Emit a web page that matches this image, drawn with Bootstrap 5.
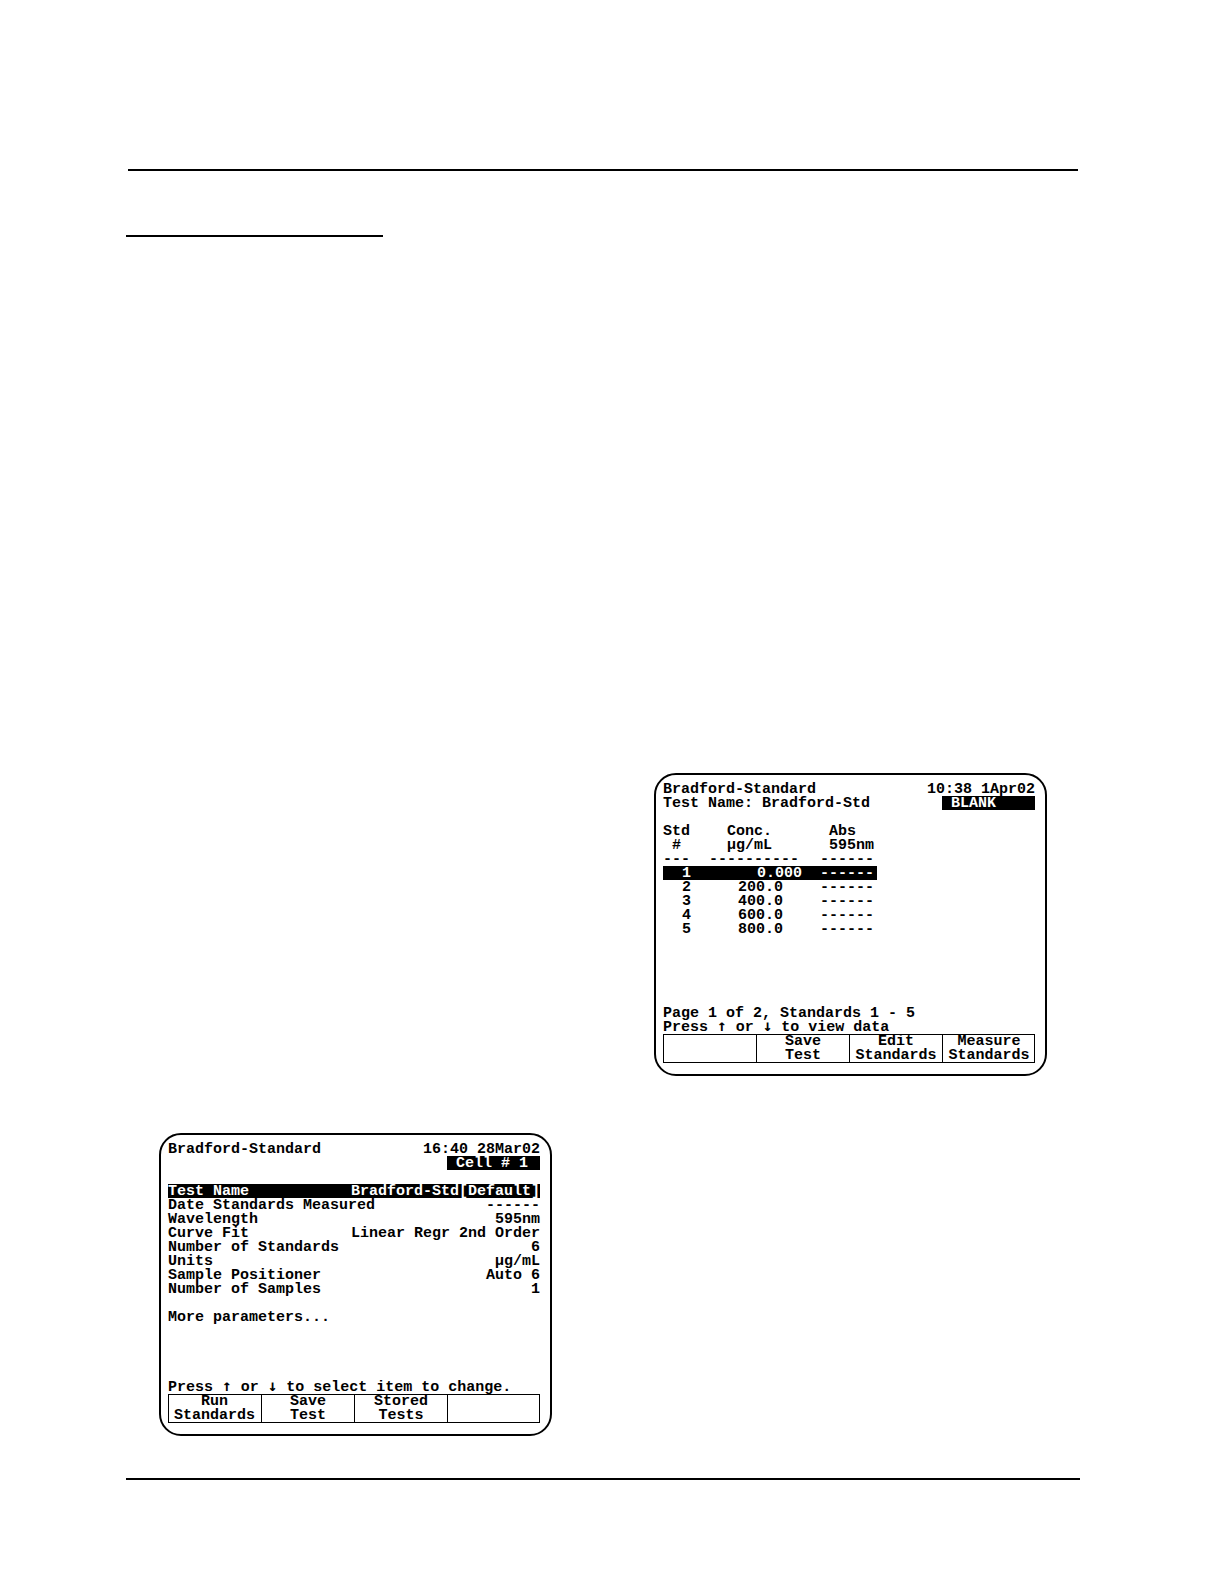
<!DOCTYPE html>
<html lang="en">
<head>
<meta charset="utf-8">
<meta name="viewport" content="width=device-width, initial-scale=1">
<title>Bradford-Standard</title>
<link rel="stylesheet" href="https://cdn.jsdelivr.net/npm/bootstrap@5.3.0/dist/css/bootstrap.min.css">
<style>
  body { background: #fff; color: #000; }
  .sheet { padding: 169px 144px 104px 126px; }
  .rule { height: 2px; margin: 0; border: 0; background: #000; opacity: 1; }
  .rule-head { margin: 0 2px 64px; }
  .rule-title { width: 257px; }
  .figures { margin: 536px 0 42px; padding: 0 33px; }
  .figure-lower { margin-top: 360px; }

  .lcd {
    width: 393px; max-width: 100%;
    padding: 7px 10px 11px 7px;
    border: 2px solid #000; border-radius: 22px;
    font: bold 15px/14px "Liberation Mono", "DejaVu Sans Mono", monospace;
    white-space: nowrap;
  }
  .lcd h2, .lcd p { margin: 0; font: inherit; }
  .lcd h2, .lcd p, .lcd time, .lcd th, .lcd td, .lcd .status { padding: 2px 0 0; line-height: 12px; }
  .lcd table { table-layout: fixed; border-collapse: collapse; }
  .lcd th, .lcd td { font-weight: inherit; vertical-align: top; }
  .lcd .invert { background: #000; color: #fff; }
  .lcd .status { width: 93px; padding-left: 9px; }
  .lcd .gap-line { margin-top: 14px; }
  .parameters-body { height: 196px; }
  .standards-body { height: 182px; }
  .arrow { font-family: "DejaVu Sans Mono", monospace; font-size: 16px; line-height: 1px; }

  .col-label { width: 180px; }
  .standards { width: 214px; }
  .col-std { width: 46px; }
  .col-conc { width: 111px; }
  .lcd .num { padding-right: 18px; text-align: right; }
  .lcd .short { padding-right: 37px; }
  .lcd .in-one { padding-left: 9px; }
  .lcd .in-two { padding-left: 18px; }

  .softkeys { display: grid; grid-template-columns: repeat(4, 1fr); box-shadow: inset 0 0 0 1px #000; }
  .softkeys button { padding: 1px 0 0; border: 0; background: none; color: inherit; font: inherit; }
  .softkeys button + button { border-left: 1px solid #000; }
</style>
<script src="https://cdn.jsdelivr.net/npm/bootstrap@5.3.0/dist/js/bootstrap.bundle.min.js"></script>
</head>
<body>
<main class="sheet">
  <hr class="rule rule-head">
  <hr class="rule rule-title">

  <div class="figures d-flex justify-content-between align-items-start">
    <section class="lcd figure-lower" aria-label="Test parameters">
      <header class="d-flex justify-content-between"><h2>Bradford-Standard</h2><time>16:40 28Mar02</time></header>
      <div class="d-flex justify-content-end"><span class="status invert">Cell # 1</span></div>
      <div class="parameters-body gap-line">
        <table class="w-100">
          <colgroup><col class="col-label"><col></colgroup>
          <tbody>
            <tr class="invert"><th scope="row">Test Name</th><td class="text-end">Bradford-Std[Default]</td></tr>
            <tr><th scope="row">Date Standards Measured</th><td class="text-end">------</td></tr>
            <tr><th scope="row">Wavelength</th><td class="text-end">595nm</td></tr>
            <tr><th scope="row">Curve Fit</th><td class="text-end">Linear Regr 2nd Order</td></tr>
            <tr><th scope="row">Number of Standards</th><td class="text-end">6</td></tr>
            <tr><th scope="row">Units</th><td class="text-end">µg/mL</td></tr>
            <tr><th scope="row">Sample Positioner</th><td class="text-end">Auto 6</td></tr>
            <tr><th scope="row">Number of Samples</th><td class="text-end">1</td></tr>
          </tbody>
        </table>
        <p class="gap-line">More parameters...</p>
      </div>
      <p>Press <span class="arrow">↑</span> or <span class="arrow">↓</span> to select item to change.</p>
      <div class="softkeys">
        <button type="button">Run<br>Standards</button>
        <button type="button">Save<br>Test</button>
        <button type="button">Stored<br>Tests</button>
        <button type="button" aria-label="Unused key"></button>
      </div>
    </section>

    <section class="lcd" aria-label="Standards data">
      <header class="d-flex justify-content-between"><h2>Bradford-Standard</h2><time>10:38 1Apr02</time></header>
      <div class="d-flex justify-content-between"><p>Test Name: Bradford-Std</p><span class="status invert">BLANK</span></div>
      <div class="standards-body gap-line">
        <table class="standards">
          <colgroup><col class="col-std"><col class="col-conc"><col></colgroup>
          <thead>
            <tr><th scope="col">Std</th><th scope="col" class="in-two">Conc.</th><th scope="col" class="in-one">Abs</th></tr>
            <tr><td class="in-one">#</td><td class="in-two">µg/mL</td><td class="in-one">595nm</td></tr>
            <tr><td>---</td><td>----------</td><td>------</td></tr>
          </thead>
          <tbody>
            <tr class="invert"><td class="num">1</td><td class="num">0.000</td><td>------</td></tr>
            <tr><td class="num">2</td><td class="num short">200.0</td><td>------</td></tr>
            <tr><td class="num">3</td><td class="num short">400.0</td><td>------</td></tr>
            <tr><td class="num">4</td><td class="num short">600.0</td><td>------</td></tr>
            <tr><td class="num">5</td><td class="num short">800.0</td><td>------</td></tr>
          </tbody>
        </table>
      </div>
      <p>Page 1 of 2, Standards 1 - 5</p>
      <p>Press <span class="arrow">↑</span> or <span class="arrow">↓</span> to view data</p>
      <div class="softkeys">
        <button type="button" aria-label="Unused key"></button>
        <button type="button">Save<br>Test</button>
        <button type="button">Edit<br>Standards</button>
        <button type="button">Measure<br>Standards</button>
      </div>
    </section>
  </div>

  <hr class="rule">
</main>
</body>
</html>
